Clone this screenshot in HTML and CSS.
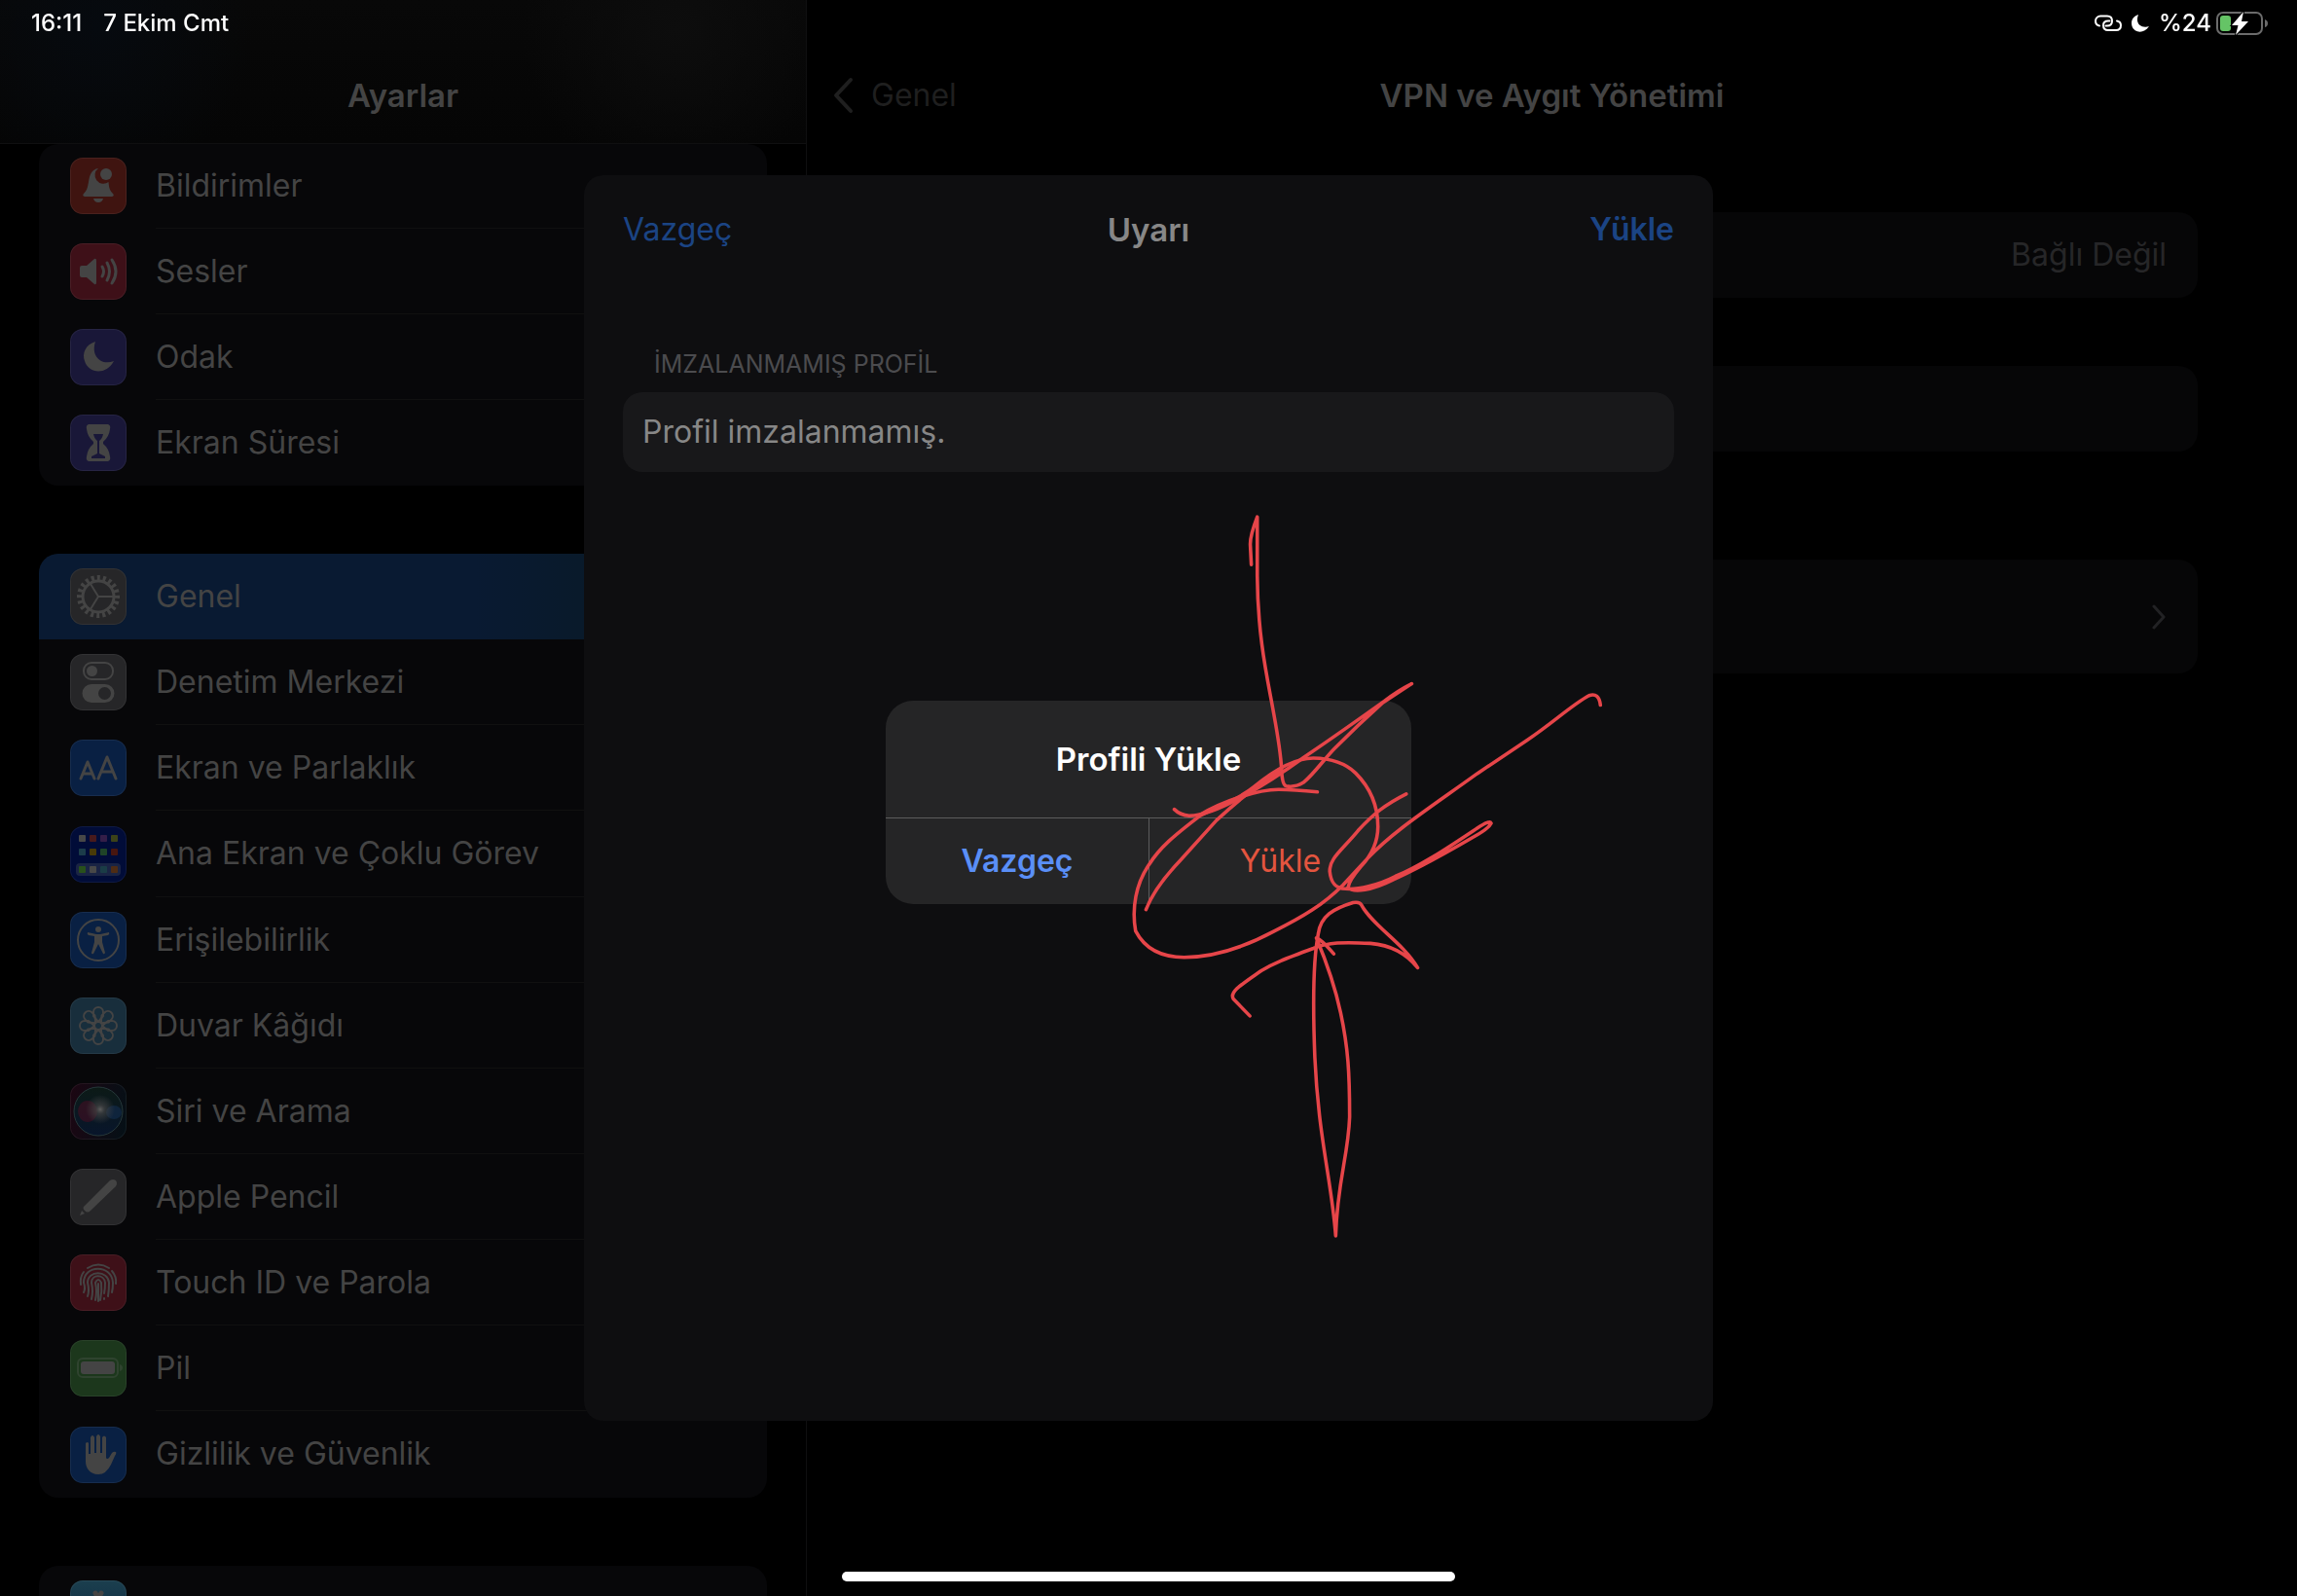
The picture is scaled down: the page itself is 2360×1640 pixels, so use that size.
FILE: index.html
```html
<!DOCTYPE html>
<html lang="tr">
<head>
<meta charset="utf-8">
<meta name="viewport" content="width=device-width, initial-scale=1">
<title>Ayarlar</title>
<link rel="stylesheet" href="styles.css">
</head>
<body>
<header class="status">
  <div class="status-side"><span>16:11</span><span>7 Ekim Cmt</span></div>
  <div class="status-side status-right">
    <svg class="glyph-link" viewBox="0 0 28 18" fill="none" stroke="#fff" stroke-width="2" stroke-linecap="round"><path d="M5 11.500C2.500 11 1 9 1 6.500C1 3.500 3.500 1.500 6 1.500H13C16 1.500 18 3.500 18 6.500C18 9.500 16 11.500 13 11.500H11.500"/><path d="M23 6.500C25.500 7 27 9 27 11C27 14 25 16 22 16H14C11 16 9 14 9 11C9 8 11 6.500 14 6.500H15.500"/></svg>
    <svg class="glyph-moon" viewBox="0 0 20 20"><path fill="#fff" d="M8 1C2 3 0 8 1.500 13C4 20 14 21 19 13C12 15.500 4 11 8 1Z"/></svg>
    <span>%24</span>
    <svg class="glyph-battery" viewBox="0 0 54 24"><rect x="1" y="1" width="46" height="22" rx="6" fill="none" stroke="#6b6b6b" stroke-width="2"/><path d="M50 8Q53 9 53 12Q53 15 50 16Z" fill="#6b6b6b"/><rect x="4" y="4" width="11" height="16" rx="3" fill="#65c466"/><path d="M28 0L16 14H22.500L20 24L33 10H26Z" fill="#fff" stroke="#000" stroke-width="2" paint-order="stroke"/></svg>
  </div>
</header>

<div class="split">
  <nav class="sidebar" aria-label="Ayarlar">
    <h1 class="bar sidebar-bar">Ayarlar</h1>
    <div class="groups">
      <ul class="group group-first">
        <li class="row"><a href="#bildirimler"><svg class="icon red" viewBox="0 0 58 58"><path d="M29 11C22 12 20 18 19 25C18 31 17 34 14 37Q12 39 15 40H43Q46 39 44 37C41 34 40 31 39.500 25A8.500 8.500 0 0 1 29 11Z"/><circle cx="37" cy="17" r="6"/><path d="M24 42H34Q33 46 29 46T24 42Z"/></svg><span>Bildirimler</span></a></li>
        <li class="row"><a href="#sesler"><svg class="icon pink" viewBox="0 0 58 58"><path d="M10 25Q10 23 12 23H17L25 16Q27 15 27 18V40Q27 43 25 42L17 35H12Q10 35 10 33Z"/><g class="line"><path d="M33 24Q36 29 33 34"/><path d="M38 20Q43 29 38 38"/><path d="M43 17Q51 29 43 41"/></g></svg><span>Sesler</span></a></li>
        <li class="row"><a href="#odak"><svg class="icon indigo" viewBox="0 0 58 58"><path d="M26 13C16 16 12 25 15 33C19 46 37 48 45 33C32 38 21 28 26 13Z"/></svg><span>Odak</span></a></li>
        <li class="row"><a href="#ekran-suresi"><svg class="icon indigo" viewBox="0 0 58 58"><path fill-rule="evenodd" d="M19 10H39Q42 11 41 15Q40 23 34 28V30Q40 35 41 43Q42 47 39 48H19Q16 47 17 43Q18 35 24 30V28Q18 23 17 15Q16 11 19 10ZM24 20Q25 25 28 27V40L22 43V45H36V43L30 40V27Q33 25 34 20Z"/></svg><span>Ekran Süresi</span></a></li>
      </ul>
      <ul class="group">
        <li class="row row-active"><a href="#genel" aria-current="page"><svg class="icon gray" viewBox="0 0 58 58"><g fill="none" stroke="#444"><circle cx="29" cy="29" r="16" stroke-width="3"/><circle cx="29" cy="29" r="19" stroke-width="6" pathLength="200" stroke-dasharray="5 5" stroke-dashoffset="2"/><path stroke-width="2" d="M29 29H44M29 29L21 16M29 29L21 42"/></g></svg><span>Genel</span></a></li>
        <li class="row"><a href="#denetim"><svg class="icon gray" viewBox="0 0 58 58"><rect x="14" y="9" width="30" height="17" rx="8" fill="none" stroke="#444" stroke-width="2"/><circle cx="22.500" cy="17.500" r="5.500"/><path fill-rule="evenodd" d="M22 31H36A9 9 0 0 1 36 50H22A9 9 0 0 1 22 31ZM35.500 34A6.500 6.500 0 1 0 35.500 47A6.500 6.500 0 1 0 35.500 34Z"/></svg><span>Denetim Merkezi</span></a></li>
        <li class="row"><a href="#ekran"><svg class="icon blue" viewBox="0 0 58 58"><g class="line"><path d="M11 40L18 23L25 40M13 35H23M29 40L38 18L47 40M32 33H44"/></g></svg><span>Ekran ve Parlaklık</span></a></li>
        <li class="row row-tall"><a href="#ana-ekran"><svg class="icon navy" viewBox="0 0 58 58"><rect x="6" y="38" width="46" height="13" rx="4" fill="#1a2444"/><g><rect x="9" y="9" width="7" height="7" rx="1" fill="#484848"/><rect x="20" y="9" width="7" height="7" rx="1" fill="#481a1c"/><rect x="31" y="9" width="7" height="7" rx="1" fill="#341e48"/><rect x="42" y="9" width="7" height="7" rx="1" fill="#3c4218"/><rect x="9" y="23" width="7" height="7" rx="1" fill="#1c3c4a"/><rect x="20" y="23" width="7" height="7" rx="1" fill="#483a08"/><rect x="31" y="23" width="7" height="7" rx="1" fill="#1f4428"/><rect x="42" y="23" width="7" height="7" rx="1" fill="#48160f"/><rect x="9" y="41" width="7" height="7" rx="1" fill="#28501c"/><rect x="20" y="41" width="7" height="7" rx="1" fill="#484848"/><rect x="31" y="41" width="7" height="7" rx="1" fill="#1a3c46"/><rect x="42" y="41" width="7" height="7" rx="1" fill="#4e2c14"/></g></svg><span>Ana Ekran ve Çoklu Görev</span></a></li>
        <li class="row"><a href="#erisilebilirlik"><svg class="icon blue" viewBox="0 0 58 58"><circle cx="29" cy="29" r="21" fill="none" stroke="#444" stroke-width="2"/><circle cx="29" cy="18" r="3"/><path d="M18 21L27 23H31L40 21Q41 23 39 24L33 25V31L36 42Q35 44 34 43L29 33L24 43Q22 44 22 42L25 31V25L19 24Q17 23 18 21Z"/></svg><span>Erişilebilirlik</span></a></li>
        <li class="row"><a href="#duvar"><svg class="icon teal" viewBox="0 0 58 58"><g fill="none" stroke="#444" stroke-width="2" stroke-linejoin="round"><circle cx="29" cy="29" r="4"/><path id="petal" d="M29 25L24 19V15A5 5 0 0 1 34 15V19Z"/><use href="#petal" transform="rotate(45 29 29)"/><use href="#petal" transform="rotate(90 29 29)"/><use href="#petal" transform="rotate(135 29 29)"/><use href="#petal" transform="rotate(180 29 29)"/><use href="#petal" transform="rotate(225 29 29)"/><use href="#petal" transform="rotate(270 29 29)"/><use href="#petal" transform="rotate(315 29 29)"/></g></svg><span>Duvar Kâğıdı</span></a></li>
        <li class="row"><a href="#siri"><svg class="icon siri" viewBox="0 0 58 58"><defs><linearGradient id="orb" x1="0" y1="0" x2="0" y2="1"><stop offset="0" stop-color="#0c1a16"/><stop offset="1" stop-color="#08152b"/></linearGradient><radialGradient id="flare"><stop offset="0" stop-color="#5c5c5c"/><stop offset=".3" stop-color="#444" stop-opacity=".7"/><stop offset="1" stop-color="#444" stop-opacity="0"/></radialGradient></defs><circle cx="29" cy="29" r="25" fill="url(#orb)" stroke="#26383a"/><ellipse cx="18" cy="29" rx="10" ry="11" fill="#3a1022" opacity=".7"/><ellipse cx="45" cy="30" rx="8" ry="7" fill="#102844" opacity=".8"/><circle cx="31" cy="27" r="15" fill="url(#flare)"/></svg><span>Siri ve Arama</span></a></li>
        <li class="row"><a href="#pencil"><svg class="icon gray" viewBox="0 0 58 58"><path d="M15 38L41 12Q44 10 47 12Q49 15 47 18L21 43Q18 46 15 43T15 38ZM12 43L15 46L10 48Z"/></svg><span>Apple Pencil</span></a></li>
        <li class="row"><a href="#touch-id"><svg class="icon pink" viewBox="0 0 58 58"><g class="line thin"><path d="M18 14Q29 7 40 14M11 31Q10 23 14 18M43 17Q48 23 47 30M14 39Q16 35 14 29C14 10 43 10 44 29Q44 35 43 39M18 43Q20 37 18 29C18 16 39 16 40 29Q40 37 39 43M22 46Q24 38 22 29C22 20 35 20 36 29Q36 36 35 40M26 47Q28 38 26 29Q29 23 32 29Q33 38 31 47M29 30V48M35 45V46"/></g></svg><span>Touch ID ve Parola</span></a></li>
        <li class="row"><a href="#pil"><svg class="icon green" viewBox="0 0 58 58"><rect x="8" y="19" width="41" height="19" rx="5" fill="none" stroke="#2f432f" stroke-width="2"/><rect x="11" y="22" width="35" height="13" rx="3"/><path d="M51 25Q54 26 54 28.500T51 32Z" fill="#2f432f"/></svg><span>Pil</span></a></li>
        <li class="row row-tall"><a href="#gizlilik"><svg class="icon blue" viewBox="0 0 58 58"><path d="M16 17Q18 15 19 17V28H21V11Q23 7 25 11V27H27V10Q29 6 31 10V27H33V11Q35 8 37 11V32Q38 34 40 32L43 27Q45 25 47 26Q48 27 46 30L42 39Q37 49 29 49C20 49 16 42 16 36Z"/></svg><span>Gizlilik ve Güvenlik</span></a></li>
      </ul>
      <ul class="group">
        <li class="row"><a href="#app-store" aria-label="App Store"><svg class="icon store" viewBox="0 0 58 58"><g fill="none" stroke="#444" stroke-width="5" stroke-linecap="round"><path d="M26 13L40 39M32 13L18 39M13 34H45"/></g></svg></a></li>
      </ul>
    </div>
  </nav>

  <main class="detail">
    <div class="bar detail-bar">
      <a class="back" href="#genel"><svg viewBox="0 0 22 38" fill="none" stroke="#1f1f1f" stroke-width="4" stroke-linecap="round" stroke-linejoin="round"><path d="M19 3L4 19L19 35"/></svg>Genel</a>
      <h2>VPN ve Aygıt Yönetimi</h2>
    </div>
    <div class="cards">
      <div class="card"><span>Bağlı Değil</span></div>
      <div class="card"></div>
      <div class="card card-link"><svg viewBox="0 0 16 26" fill="none" stroke="#222224" stroke-width="3" stroke-linecap="round" stroke-linejoin="round"><path d="M3 2L13 13L3 24"/></svg></div>
    </div>
  </main>
</div>

<div class="layer">
  <section class="sheet" aria-labelledby="sheet-title">
    <div class="sheet-bar">
      <button type="button">Vazgeç</button>
      <h2 id="sheet-title">Uyarı</h2>
      <button type="button" class="strong">Yükle</button>
    </div>
    <h3 class="sheet-label">İMZALANMAMIŞ PROFİL</h3>
    <p class="sheet-card">Profil imzalanmamış.</p>
  </section>
</div>

<div class="layer layer-alert">
  <div class="alert" role="alertdialog" aria-labelledby="alert-title">
    <h2 id="alert-title">Profili Yükle</h2>
    <div class="alert-actions">
      <button type="button" class="cancel">Vazgeç</button>
      <button type="button" class="danger">Yükle</button>
    </div>
  </div>
</div>

<svg class="ink" viewBox="0 0 1568 1568" aria-hidden="true">
  <path d="M795 157L793 118Q792 100 807 61V180C808 300 826 380 838 445C848 500 854 530 856 570Q857 600 865 603Q882 607 900 596C920 580 945 545 962 528C1000 490 1030 462 1060 435L1118 397Q1090 411 1063 432C1010 470 950 512 903 544C860 575 830 596 780 623C740 645 700 663 670 663Q652 662 640 650"/>
  <path d="M928 615C900 612 880 610 850 610C810 610 740 632 690 662"/>
  <path d="M583 852Q600 808 650 755L725 672C760 640 810 598 850 574"/>
  <path d="M1498 440Q1495 414 1475 421C1440 440 1400 478 1350 511L1250 578C1150 650 1080 695 1030 748L980 802C940 842 900 866 840 896C780 928 720 948 660 948C600 948 575 920 562 895C554 850 562 800 590 760C615 720 655 692 690 664C740 638 770 630 800 605C840 572 880 547 920 547Q975 548 1005 577C1040 612 1050 650 1050 685C1050 720 1035 745 1015 766Q992 793 990 807C1000 820 1040 812 1080 792C1140 765 1180 742 1240 707Q1272 690 1278 678Q1275 671 1250 688C1190 728 1140 762 1085 785C1050 803 1010 812 985 810C962 810 955 795 953 775C953 748 975 735 1010 693C1040 660 1065 640 1107 619"/>
  <path d="M961 941Q935 911 926 909Q960 990 975 1060C990 1130 993 1180 993 1270C990 1350 968 1400 965 1509C957 1400 930 1310 923 1150C919 1050 918 960 930 900C935 865 960 850 1000 838Q1014 836 1017 843C1040 885 1100 918 1130 969Q1095 925 1035 920C980 917 950 918 920 930C860 952 840 960 815 975C775 1003 750 1018 759 1032L792 1066"/>
</svg>
<div class="home"></div>
</body>
</html>
```
FILE: styles.css
```css
* { box-sizing: border-box; margin: 0; padding: 0; }

body {
  height: 100vh;
  overflow: hidden;
  background: #000;
  color: #444;
  font-family: Inter, "Liberation Sans", sans-serif;
  font-size: 32px;
  line-height: 40px;
}

h1, h2 { font-size: 33px; font-weight: 600; }
a { color: inherit; text-decoration: none; }
button { border: 0; background: none; color: inherit; font: inherit; cursor: pointer; }
ul { list-style: none; }

/* Status bar */
.status {
  position: absolute;
  inset: 0 0 auto;
  z-index: 4;
  display: flex;
  justify-content: space-between;
  padding: 8px 29px 0 32px;
  color: #fff;
  font-size: 24px;
  font-weight: 500;
  line-height: 32px;
}
.status-side { display: flex; align-items: center; gap: 22px; }
.status-right { gap: 5px; }
.glyph-link { width: 28px; height: 18px; margin-right: 4px; }
.glyph-moon { width: 20px; height: 20px; margin-right: 4px; }
.glyph-battery { width: 54px; height: 24px; }

/* Split view */
.split { display: grid; grid-template-columns: 829px minmax(0, 1fr); height: 100%; }
.sidebar { overflow: hidden; border-right: 1px solid #0f0f10; }
.bar { height: 148px; padding-top: 78px; }
.sidebar-bar {
  border-bottom: 1px solid #0f0f10;
  background:
    radial-gradient(circle at 12% 20%, #060a0f, transparent 160px),
    radial-gradient(circle at 84% 20%, #0d0d0d, transparent 160px),
    linear-gradient(#080808, #050505);
  text-align: center;
}
.groups { display: grid; gap: 70px; padding: 0 40px; }
.group { overflow: hidden; border-radius: 20px; background: #070709; }
.group-first { height: 351px; display: flex; flex-direction: column; justify-content: flex-end; }
.row { flex: none; height: 88px; }
.row-tall { height: 89px; }
.row a { display: flex; align-items: center; gap: 30px; height: 100%; padding-left: 32px; }
.row span { flex: 1; height: 100%; display: flex; align-items: center; border-bottom: 1px solid #101010; }
.row:last-child span, .row-active span { border-color: transparent; }
.row-active { background: linear-gradient(90deg, #091a32 60%, #091a28 80%); }

.icon { width: 58px; height: 58px; border-radius: 13px; box-shadow: inset 0 0 0 1px rgba(255, 255, 255, .06); fill: #444; }
.line { fill: none; stroke: #444; stroke-width: 3; stroke-linecap: round; stroke-linejoin: round; }
.thin { stroke-width: 2; }
.red { background: #3f1410; }
.pink { background: #3e1018; }
.indigo { background: #191738; }
.gray { background: #262628; }
.blue { background: #092043; }
.navy { background: #010c38; }
.teal { background: #182e3c; }
.green { background: #1c371c; }
.store { background: linear-gradient(#1b3f4e, #0c2440); }
.siri { background: linear-gradient(100deg, #1c0612, #041016); }

/* Detail pane */
.detail-bar { display: grid; grid-template-columns: 1fr auto 1fr; padding-left: 26px; padding-right: 26px; }
.back { display: flex; align-items: center; gap: 18px; height: 40px; color: #1f1f1f; }
.back svg { width: 22px; height: 38px; }
.cards { display: grid; gap: 70px; padding: 70px 102px; }
.card {
  display: flex;
  align-items: center;
  justify-content: flex-end;
  height: 88px;
  padding: 0 32px;
  border-radius: 20px;
  background: #060607;
  color: #262628;
}
.card-link { height: 117px; margin-top: 41px; }
.card-link svg { width: 16px; height: 26px; }

/* Sheet and alert */
.layer { position: fixed; inset: 0; display: grid; place-items: center; }
.layer-alert { padding-top: 8px; }
.sheet {
  width: min(1160px, 100%);
  height: min(1280px, 100%);
  padding: 36px 40px;
  border-radius: 20px;
  background: #0e0e10;
  color: #878787;
}
.sheet-bar { display: grid; grid-template-columns: 1fr auto 1fr; }
.sheet-bar button { justify-self: start; color: #1b4484; }
.sheet-bar .strong { justify-self: end; font-weight: 600; }
.sheet-label { margin-top: 102px; padding-left: 32px; color: #4b4b4e; font-size: 25px; font-weight: 400; line-height: 32px; }
.sheet-card { margin-top: 13px; padding: 21px 20px; border-radius: 20px; background: #18181a; }

.alert { width: min(540px, 100%); overflow: hidden; border-radius: 28px; background: #252526; }
.alert h2 { padding: 40px 20px; color: #fff; text-align: center; }
.alert-actions { display: grid; grid-template-columns: 1fr 1fr; border-top: 1px solid #5c5c5c; }
.alert button { height: 88px; }
.alert .cancel { color: #5a8ff7; font-weight: 600; }
.alert .danger { border-left: 1px solid #5c5c5c; color: #e4553f; }

/* Pen marks drawn over the alert */
.ink {
  position: fixed;
  top: calc(50% - 320px);
  left: calc(50% - 300px);
  width: 800px;
  height: 800px;
  fill: none;
  stroke: #e64549;
  stroke-width: 7;
  stroke-linecap: round;
  stroke-linejoin: round;
  pointer-events: none;
}

.home {
  position: fixed;
  bottom: 15px;
  left: 50%;
  width: 630px;
  height: 10px;
  margin-left: -315px;
  border-radius: 5px;
  background: #fff;
}
```
